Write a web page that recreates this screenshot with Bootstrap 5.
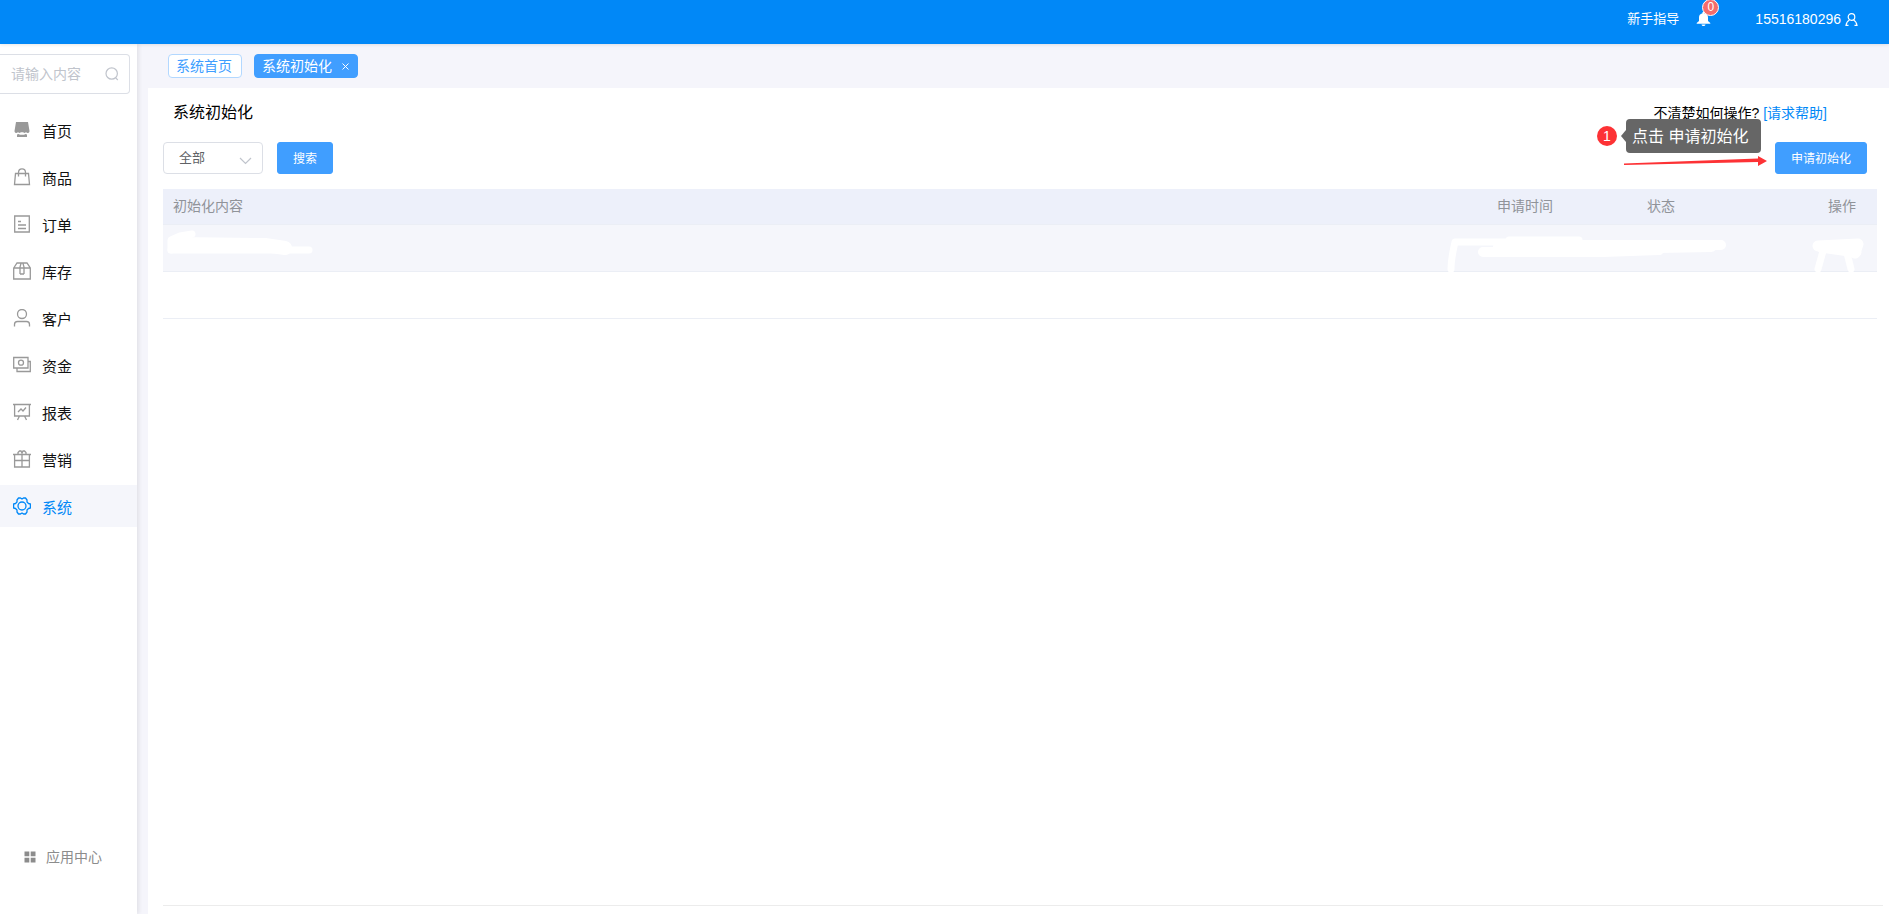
<!DOCTYPE html>
<html lang="zh-CN">
<head>
<meta charset="utf-8">
<meta name="viewport" content="width=device-width, initial-scale=1">
<title>系统初始化</title>
<link href="https://cdn.jsdelivr.net/npm/bootstrap@5.3.0/dist/css/bootstrap.min.css" rel="stylesheet">
<style>
:root { --brand: #0188f7; --primary: #409eff; --muted: #909399; }
body { font-family: "Liberation Sans", "Noto Sans CJK SC", sans-serif; font-size: 14px; line-height: 20px; color: #000; background: #f5f5fb; }
a { text-decoration: none; }
svg { display: block; flex: none; }
.topbar { height: 44px; background: var(--brand); padding: 0 31px 6px 0; box-shadow: 0 0 4px rgba(0,0,0,.15); z-index: 2; position: relative; }
.topbar a { color: #fff; }
.guide { font-size: 13px; }
.bell { margin: 0 44px 0 17px; }
.bell-count { position: absolute; left: 6px; top: -13px; min-width: 17px; height: 17px; border-radius: 9px; background: #f56c6c; border: 1px solid #fff; color: #fff; font-size: 12px; line-height: 15px; text-align: center; }
.sidebar { width: 137px; background: #fff; box-shadow: 2px 0 4px rgba(0,0,0,.08); padding: 10px 0 47px; }
.search-box { width: 130px; height: 40px; border: 1px solid #dcdfe6; border-left: 0; border-radius: 0 4px 4px 0; padding: 0 10px 0 11px; margin-bottom: 15px; }
.search-box input { border: 0; outline: 0; width: 88px; padding: 0; color: #606266; background: none; }
.search-box input::placeholder { color: #c0c4cc; opacity: 1; }
.menu a { height: 42px; margin-bottom: 5px; padding-left: 13px; gap: 11px; font-size: 15px; color: #111; }
.menu svg { color: #999; }
.menu a.active, .menu a.active svg { color: var(--brand); }
.menu a.active { background: #f5f6fb; }
.apps { color: #8c8c8c; padding-left: 24px; gap: 10px; }
.main-area { margin-left: 11px; min-width: 0; }
.tabs { height: 44px; padding: 10px 20px; gap: 12px; }
.tab { height: 24px; padding: 0 7px; border: 1px solid #b3d8ff; border-radius: 4px; background: #fff; color: var(--primary); line-height: 22px; width: 74px; }
.tab.on { background: var(--primary); border-color: var(--primary); color: #fff; width: 104px; }
.tab button { border: 0; background: none; color: inherit; padding: 0; margin-left: 9px; }
.panel { background: #fff; padding-bottom: 8px; }
.title-row { height: 50px; padding: 0 62px 0 25px; margin-bottom: 4px; }
.title-row h1 { font-size: 16px; font-weight: 400; line-height: 24px; }
.help a { color: var(--brand); }
.tools { padding: 0 22px 0 15px; margin-bottom: 15px; }
.filters { gap: 14px; }
.pick { width: 100px; height: 32px; border: 1px solid #dcdfe6; border-radius: 4px; font-size: 13px; line-height: 20px; color: #606266; padding: 0 30px 0 15px; background-position: right 10px top 11px; background-size: 13px 13px; background-image: url("data:image/svg+xml,%3Csvg xmlns='http://www.w3.org/2000/svg' viewBox='0 0 13 13'%3E%3Cpath d='M1 4l5.500 5.500L12 4' fill='none' stroke='%23c0c4cc' stroke-width='1.200'/%3E%3C/svg%3E"); }
.act { height: 32px; padding: 2px 15px 0; border: 1px solid var(--primary); border-radius: 3px; background: var(--primary); color: #fff; font-size: 12px; line-height: 20px; }
.act:hover { background: #66b1ff; color: #fff; }
.step { position: absolute; right: 106px; top: -23px; gap: 9px; }
.step-no { width: 20px; height: 20px; border-radius: 50%; background: #fd3235; color: #fff; text-align: center; }
.step-tip { position: relative; height: 34px; width: 135px; padding-left: 6px; border-radius: 4px; background: #666; color: #fff; font-size: 16px; line-height: 35px; white-space: nowrap; }
.step-tip::before { content: ""; position: absolute; left: -5px; top: 11px; border: 6px solid transparent; border-right: 5px solid #666; border-left: 0; }
.step-line { position: absolute; right: 99px; top: 13px; }
.table-wrap { margin: 0 12px 0 15px; }
.grid { width: 100%; table-layout: fixed; color: var(--muted); }
.grid th { height: 36px; background: #edf0fa; font-weight: 400; line-height: 18px; padding: 0 10px 2px; }
.grid thead { height: 36px; }
.grid th:last-child { padding-right: 21px; }
.grid td { height: 47px; position: relative; padding: 0; }
.grid th, .grid td { border-bottom: 1px solid #ebeef5; }
.grid tbody tr:first-child { background: #f5f6fb; }
.grid { border-collapse: separate; border-spacing: 0; }
.blot { position: absolute; top: 0; left: 0; fill: none; stroke: #fff; stroke-linecap: round; stroke-linejoin: round; overflow: visible; }
.foot { border-top: 1px solid #ececec; margin: auto 6px 0 15px; }
</style>
</head>
<body>
<div class="d-flex flex-column min-vh-100">
  <header class="topbar d-flex justify-content-end align-items-center">
    <a class="guide" href="#">新手指导</a>
    <a class="bell position-relative" href="#" aria-label="消息">
      <svg width="15" height="14" viewBox="0 0 15 14" fill="currentColor"><path d="M6.500 0h2v1.200C11 1.800 12 3.500 12 5.500V9l2.300 2v.8H.7V11L3 9V5.500c0-2 1-3.700 3.500-4.300zM5.500 12.500h4c-.3 1-1 1.500-2 1.500s-1.700-.5-2-1.500z"/></svg>
      <span class="bell-count">0</span>
    </a>
    <a class="d-flex align-items-center gap-1" href="#">15516180296
      <svg width="13" height="13" viewBox="0 0 13 13" fill="none" stroke="currentColor" stroke-width="1.200"><circle cx="6.500" cy="4" r="3.300"/><path d="M4.500 7C2.500 8 1.500 9.500 1 12.300h2.500M8.500 7c2 1 3 2.500 3.500 5.300H9.500"/></svg>
    </a>
  </header>

  <div class="d-flex flex-grow-1">
    <aside class="sidebar d-flex flex-column flex-shrink-0">
      <label class="search-box d-flex align-items-center justify-content-between">
        <input type="text" placeholder="请输入内容" aria-label="请输入内容">
        <svg width="14" height="14" viewBox="0 0 14 14" fill="none" stroke="#c0c4cc" stroke-width="1.200"><circle cx="6.700" cy="6.500" r="5.700"/><path d="M10.500 10.700l2.300 2.300"/></svg>
      </label>
      <nav class="menu d-flex flex-column">
        <a href="#" class="d-flex align-items-center"><svg width="18" height="18" viewBox="0 0 18 18" fill="currentColor"><path d="M3 1h12l1.500 9c0 1.500-1 2-2 2l-1.500-.7-1.500.7-1.500-.7H8L6.500 12 5 11.300 3.500 12c-1 0-2-.5-2-2zM4 13.500L5.500 13l1.500.8h4l1.500-.8 1.500.5V16H4z"/></svg><span class="pt-1">首页</span></a>
        <a href="#" class="d-flex align-items-center"><svg width="18" height="18" viewBox="0 0 18 18" fill="none" stroke="currentColor" stroke-width="1.300"><path d="M2.500 5.500h13l1 11h-15zM5.500 8.500V4.500C5.500 2 7 .8 9 .8s3.500 1.200 3.500 3.700v4"/></svg><span class="pt-1">商品</span></a>
        <a href="#" class="d-flex align-items-center"><svg width="18" height="18" viewBox="0 0 18 18" fill="none" stroke="currentColor" stroke-width="1.300"><path d="M1.700 1h14.600v16H1.700zM5 6.500h3M5 10h8M5 13.500h8"/></svg><span class="pt-1">订单</span></a>
        <a href="#" class="d-flex align-items-center"><svg width="18" height="18" viewBox="0 0 18 18" fill="none" stroke="currentColor" stroke-width="1.300"><path d="M.7 6L4 1h10l3.300 5v11H.7zM.7 6h16.600M7 12V5l1-3.500M11 12V5l-1-3.500M7 12h4"/></svg><span class="pt-1">库存</span></a>
        <a href="#" class="d-flex align-items-center"><svg width="18" height="18" viewBox="0 0 18 18" fill="none" stroke="currentColor" stroke-width="1.300"><circle cx="9" cy="5" r="4.500"/><path d="M1.500 17.500v-2c0-2 1-3 3-3h9c2 0 3 1 3 3v2"/></svg><span class="pt-1">客户</span></a>
        <a href="#" class="d-flex align-items-center"><svg width="18" height="18" viewBox="0 0 18 18" fill="none" stroke="currentColor" stroke-width="1.300"><path d="M.7 1.500h14.300v10.500H.7zM15 5.500h2.300v10H4v-3.500"/><circle cx="8" cy="6.700" r="2.500"/></svg><span class="pt-1">资金</span></a>
        <a href="#" class="d-flex align-items-center"><svg width="18" height="18" viewBox="0 0 18 18" fill="none" stroke="currentColor" stroke-width="1.300"><path d="M0 1.500h18M1.600 1.500v11.500h14.800V1.500M5 9l3-3 2 2 3-3.500M6.500 13L4.500 17M11.500 13l2 4"/></svg><span class="pt-1">报表</span></a>
        <a href="#" class="d-flex align-items-center"><svg width="18" height="18" viewBox="0 0 18 18" fill="none" stroke="currentColor" stroke-width="1.300"><path d="M0 4.500h18M1.600 4.500V17h14.800V4.500M1.600 10.500h14.800M9 4.500V17M5 4.500V2.500L6.500 1H8l1 2 1-2h1.500L13 2.500v2"/></svg><span class="pt-1">营销</span></a>
        <a href="#" class="active d-flex align-items-center"><svg width="18" height="18" viewBox="0 0 18 18" fill="none" stroke="currentColor" stroke-width="1.300" stroke-linejoin="round"><path d="M5.500 1h2l1.500 1 1.500-1h2L14 3v2l1.500 1.500 1.900.5v4l-1.900.5L14 13v2l-1.500 2h-2L9 16l-1.500 1h-2L4 15v-2l-1.500-1.500L.6 11V7l1.900-.5L4 5V3z"/><circle cx="9" cy="9" r="4"/></svg><span class="pt-1">系统</span></a>
      </nav>
      <a class="apps d-flex align-items-center mt-auto" href="#"><svg width="12" height="12" viewBox="0 0 12 12" fill="currentColor"><path d="M.5.500h4.800v4.800H.5zM6.700.500h4.800v4.800H6.700zM.5 6.700h4.800v4.800H.5zM6.700 6.700h4.800v4.800H6.700z"/></svg>应用中心</a>
    </aside>

    <main class="main-area flex-grow-1 d-flex flex-column">
      <div class="tabs d-flex">
        <a class="tab" href="#">系统首页</a>
        <span class="tab on d-flex">系统初始化<button type="button" aria-label="关闭"><svg width="9" height="9" viewBox="0 0 9 9" fill="none" stroke="currentColor"><path d="M1.500 1.500l6 6M7.500 1.500l-6 6"/></svg></button></span>
      </div>
      <section class="panel flex-grow-1 d-flex flex-column">
        <div class="title-row d-flex align-items-center justify-content-between">
          <h1 class="m-0">系统初始化</h1>
          <div class="help">不清楚如何操作? <a href="#">[请求帮助]</a></div>
        </div>
        <div class="tools d-flex justify-content-between">
          <div class="filters d-flex">
            <select class="pick form-select" aria-label="初始化内容"><option>全部</option></select>
            <button type="button" class="act btn">搜索</button>
          </div>
          <div class="position-relative">
            <button type="button" class="act btn">申请初始化</button>
            <div class="step d-flex align-items-center"><span class="step-no">1</span><span class="step-tip">点击 申请初始化</span></div>
            <svg class="step-line" width="144" height="12" viewBox="0 0 144 12" fill="#fd3235"><path d="M0 8.500L134 3.500V1l9 5-9 5V7L0 10z"/></svg>
          </div>
        </div>
        <div class="table-wrap">
          <table class="grid">
            <colgroup><col><col width="150"><col width="150"><col width="90"></colgroup>
            <thead><tr><th>初始化内容</th><th>申请时间</th><th>状态</th><th class="text-end">操作</th></tr></thead>
            <tbody>
              <tr>
                <td><svg class="blot" width="150" height="46"><path stroke-width="7" d="M8 25V15L17 11l12-2"/><path stroke-width="14" d="M12 19l90 1 20 3"/><path stroke-width="7" d="M8 25h138"/></svg></td>
                <td><svg class="blot" width="240" height="46"><path stroke-width="7" d="M-36 44c0-10 2-18 4-27h70M22 15h70"/><path stroke-width="10" d="M-4 27h120l56-2M60 20h174"/><path stroke-width="12" d="M12 22h160l52-1"/></svg></td>
                <td></td>
                <td><svg class="blot" width="90" height="46"><path stroke-width="11" d="M31 21l40-2-3 9M34 22l35 5"/><path stroke-width="7" d="M36 26l-5 18M60 28l4 16"/></svg></td>
              </tr>
              <tr><td></td><td></td><td></td><td></td></tr>
            </tbody>
          </table>
        </div>
        <div class="foot"></div>
      </section>
    </main>
  </div>
</div>
<script src="https://cdn.jsdelivr.net/npm/bootstrap@5.3.0/dist/js/bootstrap.bundle.min.js"></script>
</body>
</html>
